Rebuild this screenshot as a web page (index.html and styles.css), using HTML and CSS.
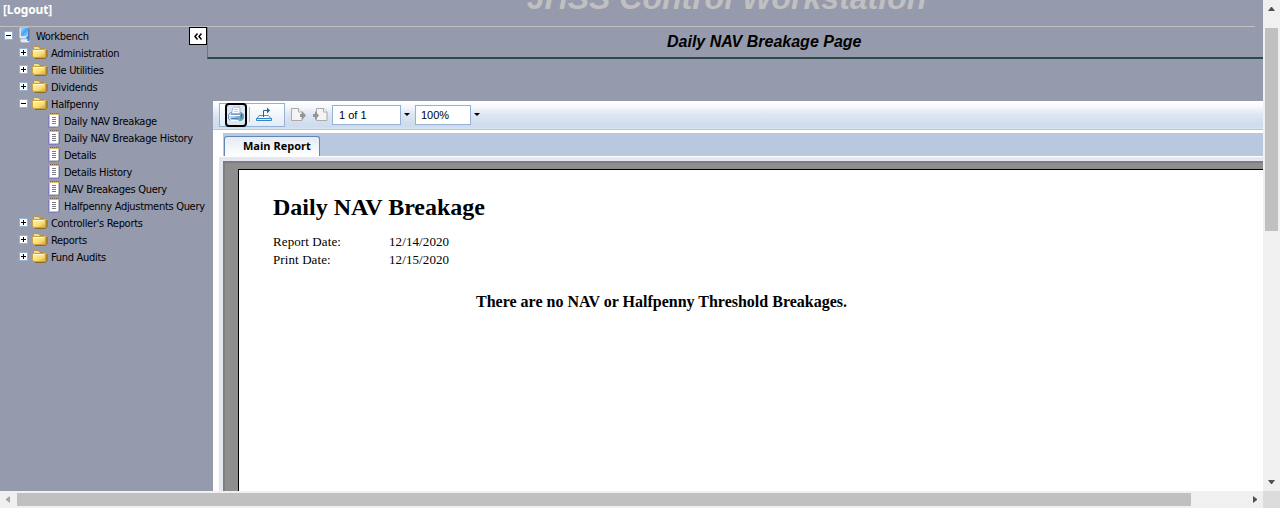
FILE: index.html
```
<!DOCTYPE html>
<html lang="en">
<head>
<meta charset="utf-8">
<title>JHSS Control Workstation</title>
<link rel="stylesheet" href="styles.css">
</head>
<body>
<svg class="defs" aria-hidden="true">
  <defs>
    <linearGradient id="gold" x1="0" y1="0" x2="1" y2="1"><stop offset="0" stop-color="#fff6b5"/><stop offset=".6" stop-color="#f8dc6e"/><stop offset="1" stop-color="#d0a33d"/></linearGradient>
    <linearGradient id="blue" x1="0" y1="0" x2="1" y2="1"><stop offset="0" stop-color="#9ce0ff"/><stop offset=".5" stop-color="#3ba5f5"/><stop offset="1" stop-color="#a5d8fa"/></linearGradient>
    <linearGradient id="prn" x1="0" y1="0" x2="1" y2="0"><stop offset="0" stop-color="#d5e6f5"/><stop offset="1" stop-color="#5a8cc0"/></linearGradient>
    <symbol id="folder" viewBox="0 0 16 14"><path d="M1.500 10V2.500L2.500 1.500h4L8 3.500h5l1.500 1v7l-2 1H3z" fill="#f3dc8e" stroke="#b88f45"/><path d="M.5 4.500h11l2 1v7h-11.500l-1.500-1.500z" fill="url(#gold)" stroke="#c9a248"/><path d="M1.500 5.500h10" stroke="#fffbd5"/><path d="M15 5v7l-1.500 1.500H3" fill="none" stroke="#8c6827"/></symbol>
    <symbol id="note" viewBox="0 0 12 16"><path d="M1.500 2.500h9v11l-1 1h-8z" fill="#fff" stroke="#c3c3d0"/><path d="M.5 3v12.500h8" fill="none" stroke="#807dbd"/><path d="M11.500 3v11l-2 1.500" fill="none" stroke="#777786"/><path d="M2 1.500h9" stroke="#80604a" stroke-dasharray="1 1"/><path d="M2 2.500h9" stroke="#ddb86d"/><path d="M4 5.500h4M4 7.500h4M4 9.500h4M4 11.500h4" stroke="#777d83"/></symbol>
    <symbol id="computer" viewBox="0 0 14 16"><path d="M1.500 1.500l1-1H10l.5 1v9l-1 1h-7l-1-1z" fill="#dce5f5" stroke="#b4bfe3"/><path d="M3 1h7v8H3z" fill="url(#blue)"/><path d="M10 1l1.500 1v8L10 11z" fill="#5b76ba"/><path d="M3 12h7l2 1v1l-2 1.500H4L2 14z" fill="#e4edf5" stroke="#b1bacb" stroke-width=".7"/><path d="M8.500 10l2 1v3" fill="none" stroke="#2986dd" stroke-width="2"/></symbol>
    <symbol id="plus" viewBox="0 0 9 9"><path d="M.5.5h8v8h-8z" fill="#fff" stroke="#8fb4d6"/><path d="M2 4.500h5M4.500 2v5" stroke="#000"/></symbol>
    <symbol id="minus" viewBox="0 0 9 9"><path d="M.5.5h8v8h-8z" fill="#fff" stroke="#8fb4d6"/><path d="M2 4.500h5" stroke="#000"/></symbol>
  </defs>
</svg>
<div class="window">
  <div class="view">
    <header class="banner"><a class="logout">[Logout]</a><h1 class="brand">JHSS Control Workstation</h1></header>
    <div class="body">
      <nav class="side">
        <div class="row root"><svg class="toggle"><use href="#minus"/></svg><svg class="computer"><use href="#computer"/></svg><span class="lb">Workbench</span></div>
        <div class="row"><svg class="toggle"><use href="#plus"/></svg><svg class="folder"><use href="#folder"/></svg><span class="lb">Administration</span></div>
        <div class="row"><svg class="toggle"><use href="#plus"/></svg><svg class="folder"><use href="#folder"/></svg><span class="lb">File Utilities</span></div>
        <div class="row"><svg class="toggle"><use href="#plus"/></svg><svg class="folder"><use href="#folder"/></svg><span class="lb">Dividends</span></div>
        <div class="row"><svg class="toggle"><use href="#minus"/></svg><svg class="folder"><use href="#folder"/></svg><span class="lb">Halfpenny</span></div>
        <div class="row leaf"><svg class="note"><use href="#note"/></svg><span class="lb">Daily NAV Breakage</span></div>
        <div class="row leaf"><svg class="note"><use href="#note"/></svg><span class="lb">Daily NAV Breakage History</span></div>
        <div class="row leaf"><svg class="note"><use href="#note"/></svg><span class="lb">Details</span></div>
        <div class="row leaf"><svg class="note"><use href="#note"/></svg><span class="lb">Details History</span></div>
        <div class="row leaf"><svg class="note"><use href="#note"/></svg><span class="lb">NAV Breakages Query</span></div>
        <div class="row leaf"><svg class="note"><use href="#note"/></svg><span class="lb">Halfpenny Adjustments Query</span></div>
        <div class="row"><svg class="toggle"><use href="#plus"/></svg><svg class="folder"><use href="#folder"/></svg><span class="lb">Controller's Reports</span></div>
        <div class="row"><svg class="toggle"><use href="#plus"/></svg><svg class="folder"><use href="#folder"/></svg><span class="lb">Reports</span></div>
        <div class="row"><svg class="toggle"><use href="#plus"/></svg><svg class="folder"><use href="#folder"/></svg><span class="lb">Fund Audits</span></div>
        <button class="collapse" aria-label="Collapse"><svg width="8" height="7" viewBox="0 0 8 7"><path d="M3.500.5L1 3.500l2.500 3M7.500.5L5 3.500l2.500 3" fill="none" stroke="#000" stroke-width="1.500"/></svg></button>
      </nav>
      <main class="main">
        <h2 class="pagetitle">Daily NAV Breakage Page</h2>
        <section class="viewer">
          <div class="toolbar">
            <div class="group">
              <button class="print" aria-label="Print"><svg width="18" height="18" viewBox="0 0 18 18"><path d="M4.500 7.500l1-5 2-1.500h5l.5 1.500v5z" fill="#f8fbff" stroke="#9ab6d6"/><path d="M7 3.500h4M7 5.500h4" stroke="#c2d2e4"/><path d="M1.500 8.500l2-2h1v2h8l1-2h1l2 2v4l-2 2h-11l-2-1.500z" fill="url(#prn)" stroke="#7b9cc4"/><path d="M2 9.500h11" stroke="#fff"/><path d="M4 12.500h7" stroke="#3f80bb"/><path d="M3 15h8l1-1H4z" fill="#fff"/><path d="M14.500 8v3" stroke="#2e6398"/><path d="M13 11.500h1.500" stroke="#34a84b" stroke-width="2"/></svg></button>
              <i class="sep"></i>
              <svg class="export" width="18" height="16" viewBox="0 0 18 16"><path d="M4 8.500h9.500l2.500 3H2z" fill="#e7f3fd" stroke="#4b96d6"/><path d="M1.500 11.500h15v2h-15z" fill="#d5eafa" stroke="#3884c8"/><path d="M8.500 10V3.500H13" fill="none" stroke="#275f93"/><path d="M12 .5l3 3-3 3z" fill="#275f93"/></svg>
            </div>
            <svg class="prev" width="17" height="16" viewBox="0 0 17 16"><path d="M1.500 1.500h7l3.500 3.500v8.500H1.500z" fill="#f4f4f4" stroke="#aaa"/><path d="M8.500 1.500V5H12" fill="#fff" stroke="#aaa"/><path d="M10 7h2V4l4 4.500-4 4.500v-3h-2z" fill="#949494"/></svg>
            <svg class="next" width="17" height="16" viewBox="0 0 17 16"><path d="M4.500 1.500h7.500l3 3.500v8.500H4.500z" fill="#f4f4f4" stroke="#aaa"/><path d="M11.500 1.500V5H15" fill="#fff" stroke="#aaa"/><path d="M1 7h2V4l4 4.500L3 13v-3H1z" fill="#949494"/></svg>
            <div class="field pages">1 of 1</div><i class="drop"></i>
            <div class="field zoom">100%</div><i class="drop"></i>
          </div>
          <div class="tabs"><div class="tab">Main Report</div></div>
          <div class="canvas">
            <article class="sheet">
              <h3 class="title">Daily NAV Breakage</h3>
              <dl class="dates"><dt>Report Date:</dt><dd>12/14/2020</dd><dt>Print Date:</dt><dd>12/15/2020</dd></dl>
              <p class="message">There are no NAV or Halfpenny Threshold Breakages.</p>
            </article>
          </div>
        </section>
      </main>
    </div>
  </div>
  <div class="vscroll"><svg width="7" height="4" viewBox="0 0 7 4"><path d="M3 0h1l3 4H0z" fill="#505050"/></svg><div class="vthumb"></div><svg class="down" width="7" height="4" viewBox="0 0 7 4"><path d="M0 0h7L4 4H3z" fill="#505050"/></svg></div>
  <div class="hscroll"><svg width="4" height="7" viewBox="0 0 4 7"><path d="M4 0v7L0 4V3z" fill="#a3a3a3"/></svg><div class="hthumb"></div><svg class="right" width="4" height="7" viewBox="0 0 4 7"><path d="M0 0v7l4-3V3z" fill="#505050"/></svg></div>
  <div class="corner"></div>
</div>
</body>
</html>
```
FILE: styles.css
```
* { box-sizing: border-box; }
body { margin: 0; overflow: hidden; }
svg { display: block; flex: none; }
button { padding: 0; margin: 0; }
h1, h2, h3, p, dl, dd { margin: 0; }
.defs { position: absolute; width: 0; height: 0; }
.window { display: grid; width: 1280px; height: 508px; grid-template: 491px 17px / 1263px 17px; }
.view { background: #969aad; overflow: hidden; }
.banner { display: flex; height: 27px; position: relative; }
.banner::after { content: ""; position: absolute; left: 0; top: 26px; width: 1255px; height: 1px; background: #c0c0c0; }
.logout { width: 198px; padding: 2px 0 0 3px; font: bold 12px/16px "Noto Sans", sans-serif; letter-spacing: -.15px; color: #fff; white-space: nowrap; }
.brand { width: 1057px; margin-top: -20px; text-align: center; font: italic bold 32px/37px "Liberation Sans", sans-serif; color: #c0c0c0; }
.body { display: flex; height: 464px; }
.side { position: relative; width: 207px; flex: none; }
.row { display: flex; align-items: center; height: 17px; padding-left: 19px; }
.root { padding-left: 4px; }
.leaf { padding-left: 48px; }
.toggle { width: 9px; height: 9px; margin-right: 4px; }
.root .toggle { margin-right: 5px; }
.folder { width: 16px; height: 14px; margin: 0 3px 1px 0; }
.computer { width: 14px; height: 16px; margin: 0 4px 1px 0; }
.note { width: 12px; height: 16px; margin: 0 4px 0 0; align-self: flex-start; }
.lb { padding-top: 2px; font: 11px/15px "DejaVu Sans Condensed", sans-serif; letter-spacing: -.3px; color: #000; white-space: nowrap; }
.collapse { position: absolute; left: 189px; top: 0; width: 18px; height: 18px; display: grid; place-items: center; border: 1px solid #000; background: #fff; }
.main { flex: 1; min-width: 0; display: flex; flex-direction: column; }
.pagetitle { height: 32px; margin-bottom: 42px; padding: 0 0 0 459px; border-left: 1px solid #4682b4; border-bottom: 2px solid #2f4848; font: italic bold 16px/29px "Liberation Sans", sans-serif; color: #000; }
.viewer { flex: 1; margin-left: 6px; background: #fff; }
.toolbar { display: flex; align-items: center; height: 29px; padding: 0 0 1px 6px; border-bottom: 1px solid #b8c1d5; background: linear-gradient(#fff 0, #f6f8fc 20%, #dce5f2 50%, #cddbec 92%, #dce6f2 100%); font: 11px/18px "Liberation Sans", sans-serif; }
.group { display: flex; align-items: center; width: 66px; height: 24px; padding-left: 5px; border: 1px solid #96b1d5; background: linear-gradient(#fff, #e3ecf6); }
.print { flex: none; width: 22px; height: 24px; border: 2px solid #000; border-radius: 4px; background: #dce7f3; }
.sep { width: 1px; height: 15px; margin: 0 5px 0 2px; background: #b3bbd5; }
.prev { margin-left: 5px; }
.next { margin: 0 3px 0 5px; }
.field { height: 20px; padding-left: 6px; border: 1px solid #96b1d5; background: #fff; }
.pages { width: 69px; }
.zoom { width: 56px; padding-left: 5px; }
.drop { width: 0; height: 0; margin: 0 5px 0 3px; border: solid transparent; border-width: 3px 3px 0; border-top-color: #000; box-sizing: content-box; }
.tabs { height: 23px; margin: 3px 0 1px 10px; padding: 3px 0 0 1px; background: #b8c8df; }
.tab { width: 96px; height: 20px; padding-left: 18px; border: 1px solid #6484b4; border-bottom: 0; border-radius: 3px 3px 0 0; background: linear-gradient(#e4ebf5, #fff); font: bold 11px/17px "Open Sans", "Noto Sans", sans-serif; white-space: nowrap; }
.canvas { height: 334px; margin-left: 6px; border-top: 4px solid #e4e8f0; border-left: 4px solid #e4e6f0; padding: 8px 0 0 15px; background: #8e8e8e; box-shadow: inset 2px 2px #7d7d7d; }
.sheet { height: 322px; padding: 23px 0 0 34px; border: solid #000; border-width: 1px 0 0 1px; background: #fff; font-family: "Liberation Serif", serif; }
.title { font-size: 24px; line-height: 28px; }
.dates { display: grid; grid-template: 18px 18px / 116px auto; margin-top: 12px; font-size: 13px; line-height: 18px; letter-spacing: .1px; }
.message { margin: 24px 0 0 203px; font-weight: bold; font-size: 16px; line-height: 18px; }
.vscroll, .hscroll { display: flex; align-items: center; background: #f0f0f0; }
.vscroll { flex-direction: column; padding-top: 7px; }
.vthumb { width: 13px; height: 203px; margin-top: 17px; background: #c0c0c0; }
.down { margin-top: 249px; }
.hscroll { padding-left: 6px; }
.hthumb { width: 1174px; height: 13px; margin-left: 7px; background: #c0c0c0; }
.right { margin-left: 62px; }
.corner { background: #dcdcdc; }
```
